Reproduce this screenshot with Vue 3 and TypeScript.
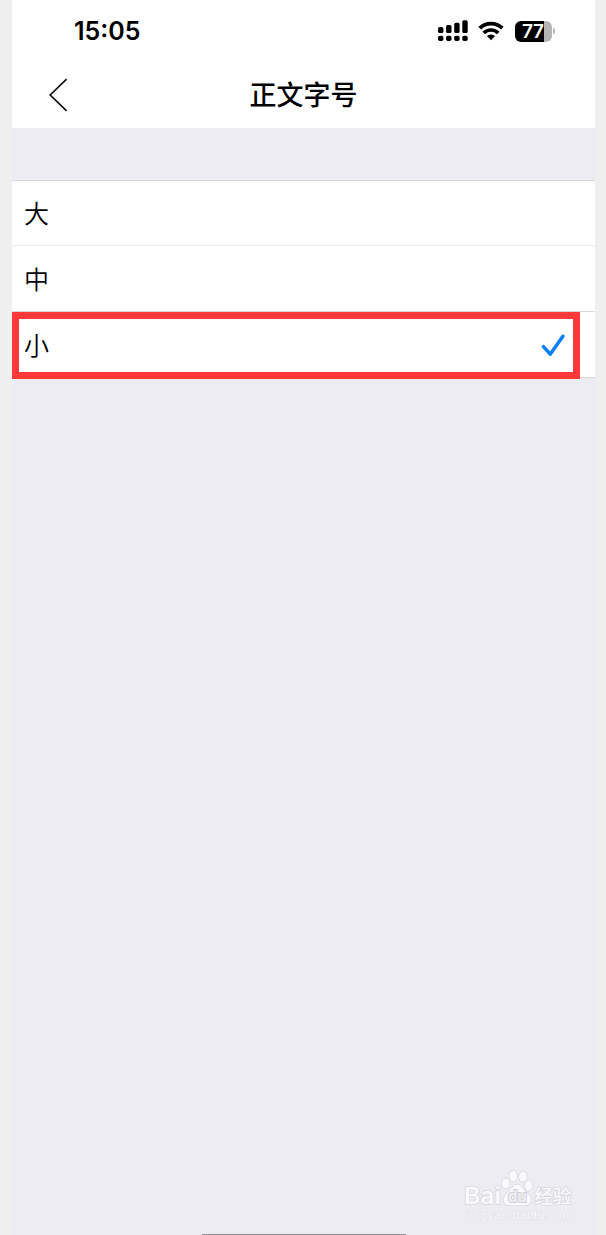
<script setup lang="ts">
import { ref } from 'vue'

interface SizeOption {
  id: string
  label: string
}

const options: SizeOption[] = [
  { id: 'large', label: '大' },
  { id: 'medium', label: '中' },
  { id: 'small', label: '小' },
]

const selected = ref('small')
</script>

<template>
  <div class="stage">
    <main class="phone">
      <header class="top">
        <div class="status">
          <span class="time">15:05</span>
          <div class="indicators">
            <svg class="signal" width="30" height="22" viewBox="0 0 30 22">
              <rect x="0" y="7" width="5.4" height="6" rx="1.6" />
              <rect x="8.1" y="5" width="5.4" height="8" rx="1.6" />
              <rect x="16.2" y="2.7" width="5.4" height="10.3" rx="1.6" />
              <rect x="24.3" y="0.2" width="5.4" height="12.8" rx="1.6" />
              <rect x="0" y="15.7" width="5.4" height="5.3" rx="1.8" />
              <rect x="8.1" y="15.7" width="5.4" height="5.3" rx="1.8" />
              <rect x="16.2" y="15.7" width="5.4" height="5.3" rx="1.8" />
              <rect x="24.3" y="15.7" width="5.4" height="5.3" rx="1.8" />
            </svg>
            <svg class="wifi" width="26" height="22" viewBox="0 0 26 22">
              <path d="M1.7 8.2A16 16 0 0 1 24.3 8.2" fill="none" stroke="#000" stroke-width="3.8" />
              <path d="M5.8 13A10.2 10.2 0 0 1 20.2 13" fill="none" stroke="#000" stroke-width="3.7" />
              <path d="M8.9 16.1A5.8 5.8 0 0 1 17.1 16.1L13 20.2Z" />
            </svg>
            <div class="battery">
              <span class="level">77</span>
            </div>
            <span class="nub"></span>
          </div>
        </div>
        <nav class="nav">
          <svg class="back" width="20" height="34" viewBox="0 0 20 34">
            <path d="M18.6 1.2L2.2 17L18.6 32.8" fill="none" stroke="#111" stroke-width="1.7" />
          </svg>
          <h1 class="title">正文字号</h1>
        </nav>
      </header>
      <ul class="list">
        <li v-for="option in options" :key="option.id" class="row" @click="selected = option.id">
          <span class="label">{{ option.label }}</span>
          <svg v-if="selected === option.id" class="check" width="26" height="26" viewBox="0 0 26 26">
            <path d="M3.4 14.6L10.2 22.2L22.9 4.3" fill="none" stroke="#087fff" stroke-width="3.5" stroke-linecap="round" stroke-linejoin="round" />
          </svg>
        </li>
        <li class="frame" aria-hidden="true"></li>
      </ul>
      <svg class="watermark" width="120" height="60" viewBox="0 0 120 60">
        <g class="mark">
          <text class="latin" x="3" y="38.5" textLength="37" lengthAdjust="spacingAndGlyphs">Bai</text>
          <ellipse cx="44.8" cy="18.4" rx="3.8" ry="5" />
          <ellipse cx="52.2" cy="10.9" rx="3.8" ry="5.3" />
          <ellipse cx="62" cy="11.6" rx="3.8" ry="5" />
          <ellipse cx="67.7" cy="20.6" rx="3.8" ry="5" />
          <path d="M56 19.5C60.5 19.5 61.5 24 65 27C68.6 30 70 31.8 70 35C70 38.6 67.6 40.2 64 40.2H48.5C45 40.2 42.8 38.4 42.8 35C42.8 31.8 44.2 30 47.5 27C50.8 24 51.5 19.5 56 19.5Z" />
          <text class="cjk" x="73.5" y="38" textLength="37" lengthAdjust="spacingAndGlyphs">经验</text>
          <text class="url" x="5" y="53.5" textLength="107" lengthAdjust="spacingAndGlyphs">jingyan.baidu.com</text>
          <text class="du" x="47" y="36.6" textLength="18.6" lengthAdjust="spacingAndGlyphs">du</text>
        </g>
      </svg>
      <div class="home"></div>
    </main>
  </div>
</template>

<style>
body {
  margin: 0;
  background: #efefef;
}
</style>

<style scoped>
.stage {
  height: 1235px;
  padding: 0 11px 0 12px;
  background: #efefef;
  overflow: hidden;
  box-sizing: border-box;
  font-family: "Liberation Sans", "Noto Sans CJK SC", sans-serif;
}

.phone {
  position: relative;
  height: 1235px;
  background: #edecf2;
  overflow: hidden;
}

.top {
  height: 128px;
  background: #fff;
}

.status {
  display: flex;
  justify-content: space-between;
  align-items: center;
  height: 62px;
  padding: 0 40px 0 62px;
}

.time {
  font: 600 25px/30px Inter, sans-serif;
}

.indicators {
  display: flex;
  align-items: center;
}

.wifi {
  margin-left: 10px;
}

.battery {
  width: 37px;
  height: 21px;
  margin-left: 11px;
  border-radius: 6px;
  background: linear-gradient(to right, #000 29px, #b5b5b5 29px);
}

.level {
  display: block;
  padding-left: 7px;
  color: #fff;
  font: 600 19px/21px Inter, sans-serif;
  letter-spacing: -0.2px;
}

.nub {
  width: 2px;
  height: 6px;
  margin-left: 1px;
  border-radius: 0 2px 2px 0;
  background: #b5b5b5;
}

.nav {
  display: grid;
  grid-template-columns: 60px 1fr 60px;
  align-items: center;
  height: 66px;
}

.back {
  margin-left: 36px;
}

.title {
  margin: 0;
  padding-bottom: 2px;
  text-align: center;
  font: 500 27px/38px "Noto Sans CJK SC", sans-serif;
}

.list {
  position: relative;
  margin: 52px 0 0;
  padding: 0;
  list-style: none;
  border-top: 1px solid #d5d4da;
}

.row {
  display: flex;
  align-items: center;
  justify-content: space-between;
  box-sizing: border-box;
  height: 66px;
  padding: 0 29px 0 12px;
  border-bottom: 1px solid #d9d9dc;
  background: #fff;
  color: #000;
  font: 350 25px/36px "Noto Sans CJK SC", sans-serif;
}

.label {
  padding-bottom: 2px;
}

.row:first-child {
  height: 65px;
  border-bottom-color: #ededed;
}

.frame {
  position: absolute;
  top: 131px;
  left: 0;
  width: 568px;
  height: 67px;
  box-sizing: border-box;
  border: 7px solid #ff3838;
  pointer-events: none;
}

.watermark {
  position: absolute;
  left: 449px;
  top: 1165px;
}

.mark {
  fill: #fafafc;
  stroke: #d9d8de;
  stroke-width: 1.6px;
  paint-order: stroke;
}

.latin {
  font: 600 22.5px Inter, sans-serif;
}

.cjk {
  font: 500 18.5px "Noto Sans CJK SC", sans-serif;
}

.url {
  font: 400 11px "DejaVu Sans", sans-serif;
  fill: #f8f8fb;
  stroke-width: 1px;
  stroke: #e2e1e7;
}

.du {
  font: 600 15.5px Inter, sans-serif;
  fill: #f0f0f4;
  stroke: #cfced4;
  stroke-width: 2px;
}

.home {
  position: absolute;
  left: 190px;
  bottom: 0;
  width: 204px;
  height: 1px;
  background: #918f94;
}
</style>
